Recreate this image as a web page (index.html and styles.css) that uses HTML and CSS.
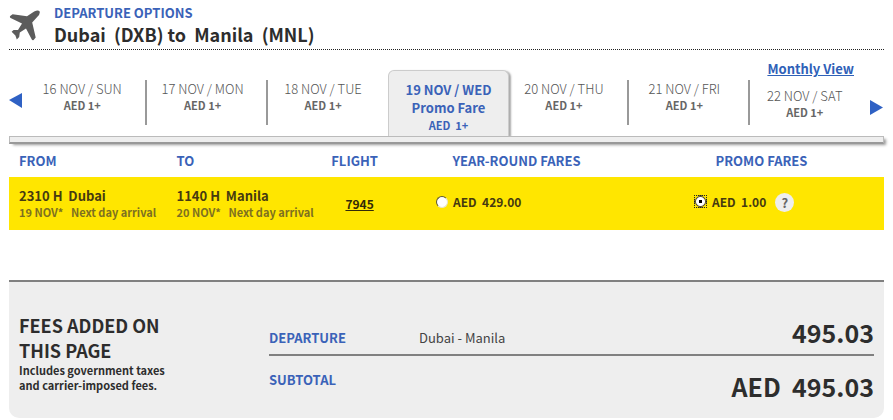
FILE: index.html
```html
<!DOCTYPE html>
<html lang="en">
<head>
<meta charset="utf-8">
<meta name="viewport" content="width=device-width, initial-scale=1">
<title>Departure options</title>
<link rel="stylesheet" href="styles.css">
</head>
<body>
<main class="page">
  <header class="route">
    <svg class="plane" viewBox="0 0 32 32" aria-hidden="true"><path d="M1.200 6 L3.600 4.200 L18 6.300 L25.200 1.600 Q29 -0.600 30.500 1.200 Q31.600 3.400 28.400 6.800 L23.200 12.600 L26.700 27.400 L24.600 30 Q23.500 30.600 22.800 29.400 L17 18.500 L10.800 22.500 L10.200 27 L7.800 29.500 L6.400 25.400 L2.600 21.800 L4.600 19.900 L9 20 L13 13.600 L1.600 8 Q0.400 7.200 1.200 6 Z"/></svg>
    <div>
      <p class="label">DEPARTURE OPTIONS</p>
      <h1 class="title">Dubai &nbsp;(DXB) to &nbsp;Manila &nbsp;(MNL)</h1>
    </div>
  </header>

  <nav class="dates" aria-label="Departure date">
    <button class="arrow" type="button" aria-label="Earlier dates"><svg viewBox="0 0 14 16"><path d="M0 8 L13 1 V16 Z"/></svg></button>
    <ul class="days">
      <li class="day"><span>16 NOV / SUN</span><b>AED 1+</b></li>
      <li class="day"><span>17 NOV / MON</span><b>AED 1+</b></li>
      <li class="day"><span>18 NOV / TUE</span><b>AED 1+</b></li>
      <li class="day current"><strong>19 NOV / WED</strong><strong>Promo Fare</strong><b>AED &nbsp;1+</b></li>
      <li class="day"><span>20 NOV / THU</span><b>AED 1+</b></li>
      <li class="day"><span>21 NOV / FRI</span><b>AED 1+</b></li>
      <li class="day last"><a class="monthly" href="#">Monthly View</a><span>22 NOV / SAT</span><b>AED 1+</b></li>
    </ul>
    <button class="arrow" type="button" aria-label="Later dates"><svg viewBox="0 0 14 16"><path d="M0 1 L13 8.500 L0 16 Z"/></svg></button>
  </nav>
  <div class="shelf"></div>

  <table class="flights">
    <thead>
      <tr><th class="from">FROM</th><th class="to">TO</th><th class="flight">FLIGHT</th><th class="regular">YEAR-ROUND FARES</th><th class="promo">PROMO FARES</th></tr>
    </thead>
    <tbody>
      <tr>
        <td class="from"><strong>2310 H &nbsp;Dubai</strong><small>19 NOV* &nbsp; Next day arrival</small></td>
        <td class="to"><strong>1140 H &nbsp;Manila</strong><small>20 NOV* &nbsp; Next day arrival</small></td>
        <td class="flight"><a href="#">7945</a></td>
        <td class="regular"><div class="fare"><input type="radio" name="fare" id="fare-regular"><label for="fare-regular">AED &nbsp;429.00</label></div></td>
        <td class="promo"><div class="fare"><input type="radio" name="fare" id="fare-promo" checked><label for="fare-promo">AED &nbsp;1.00</label><button class="help" type="button">?</button></div></td>
      </tr>
    </tbody>
  </table>

  <section class="fees">
    <div class="about">
      <h2>FEES ADDED ON THIS PAGE</h2>
      <p>Includes government taxes and carrier-imposed fees.</p>
    </div>
    <div class="totals">
      <div class="line"><span class="label">DEPARTURE</span><span class="leg">Dubai - Manila</span><strong class="amount">495.03</strong></div>
      <div class="line subtotal"><span class="label">SUBTOTAL</span><strong class="amount">AED &nbsp;495.03</strong></div>
    </div>
  </section>
</main>
</body>
</html>
```
FILE: styles.css
```css
* { box-sizing: border-box; }

body {
  margin: 0;
  background: #fff;
  color: #2d2d2d;
  font: 13px/16px "Noto Sans CJK SC", "Open Sans", sans-serif;
}

h1, h2, p, ul { margin: 0; padding: 0; }
button { padding: 0; border: 0; background: none; font: inherit; cursor: pointer; }

.page { padding: 5px 9px 0; }

.label { color: #3a62b8; font-weight: 700; }

.route {
  display: flex;
  gap: 13px;
  height: 45px;
  border-bottom: 1px dotted #222;
}
.plane { width: 32px; height: 32px; margin-top: 5px; fill: #5c5c5c; }
.title { font-size: 18px; line-height: 26px; }

.dates { display: flex; align-items: flex-start; padding-top: 20px; }
.arrow { flex: none; width: 14px; margin-top: 22px; }
.arrow:first-child { width: 18px; }
.arrow:last-child { margin-top: 29px; }
.arrow svg { display: block; width: 14px; height: 16px; fill: #2f61c4; }

.days {
  flex: 1;
  display: grid;
  grid-template-columns: repeat(7, 1fr);
  align-items: start;
  list-style: none;
}
.day {
  display: flex;
  flex-direction: column;
  align-items: center;
  height: 45px;
  margin-top: 10px;
  padding-right: 8px;
  border-right: 2px solid #999;
  color: #555;
  line-height: 17px;
}
.day span { font-weight: 300; }
.day b { color: #666; font-size: 11px; line-height: 16px; }
.day:nth-child(3), .day.last { border-right-color: transparent; }
.day.current {
  height: 66px;
  margin-top: 0;
  padding: 10px 0 0;
  border: 1px solid #ccc;
  border-bottom: 0;
  border-radius: 6px 6px 0 0;
  background: #eee;
  box-shadow: 2px 1px 2px #aaa;
  line-height: 18px;
}
.day.current, .day.current b { color: #3a62b8; }
.day.last { height: auto; margin-top: -10px; }
.monthly {
  align-self: flex-end;
  margin-bottom: 10px;
  padding-right: 6px;
  color: #2f61b8;
  font-weight: 700;
}

.shelf {
  position: relative;
  height: 8px;
  border: 1px solid #bbb;
  border-bottom: 2px solid #999;
  background: #eee;
  box-shadow: 3px 2px 3px -1px #999;
}

.flights { width: 100%; border-collapse: collapse; table-layout: fixed; }
.flights th { height: 33px; padding: 0; color: #3a62b8; }
.flights td { height: 53px; padding: 0; background: #ffe600; color: #463a10; }
.flights .from { width: 18%; padding-left: 10px; text-align: left; }
.flights .to { width: 17%; padding-left: 10px; text-align: left; }
.flights .flight { width: 9%; text-align: center; }
.flights .regular, .flights .promo { width: 28%; }
.flights td.flight { padding-left: 10px; }
.flights td.regular { padding-left: 42px; }
.flights td.promo { padding-left: 55px; }
.flights a { color: #332a08; font-size: 12px; font-weight: 700; }
.flights strong, .flights small { display: block; white-space: nowrap; }
.flights small { color: #7d7020; font-size: 11px; font-weight: 700; }

.fare {
  display: flex;
  align-items: center;
  gap: 5px;
  height: 20px;
  margin-bottom: 4px;
  font-size: 12px;
  font-weight: 700;
}
.fare input {
  appearance: none;
  width: 12px;
  height: 12px;
  margin: 0;
  border: 1px solid;
  border-color: #5c5530 #e8e4c8 #e8e4c8 #5c5530;
  border-radius: 50%;
  background: #fff;
}
.fare input:checked {
  width: 13px;
  height: 13px;
  border: 1px dotted #222;
  border-radius: 0;
  background: radial-gradient(circle, #000 2px, #fff 2px, #fff 4px, #5c5530 5px, #ffe600 6px);
}
.help {
  width: 19px;
  height: 19px;
  margin: 2px 0 0 4px;
  border-radius: 50%;
  background: #eee;
  color: #666;
  font-size: 13px;
  font-weight: 700;
}

.fees {
  display: flex;
  gap: 90px;
  margin-top: 50px;
  padding: 31px 10px 19px;
  border-top: 2px solid #808080;
  border-radius: 0 0 10px 10px;
  background: #eee;
}
.about { flex: 0 0 160px; }
.about h2 { font-size: 18px; line-height: 25px; }
.about p { font-size: 11px; font-weight: 700; line-height: 15px; }
.totals { flex: 1; }
.line { display: flex; align-items: flex-end; height: 43px; padding-bottom: 8px; }
.line:first-child { border-bottom: 2px solid #808080; }
.line .label { width: 150px; }
.leg { color: #444; }
.amount { margin-left: auto; font-size: 25px; line-height: 28px; }
.subtotal { align-items: flex-start; padding: 16px 0 0; }
```
